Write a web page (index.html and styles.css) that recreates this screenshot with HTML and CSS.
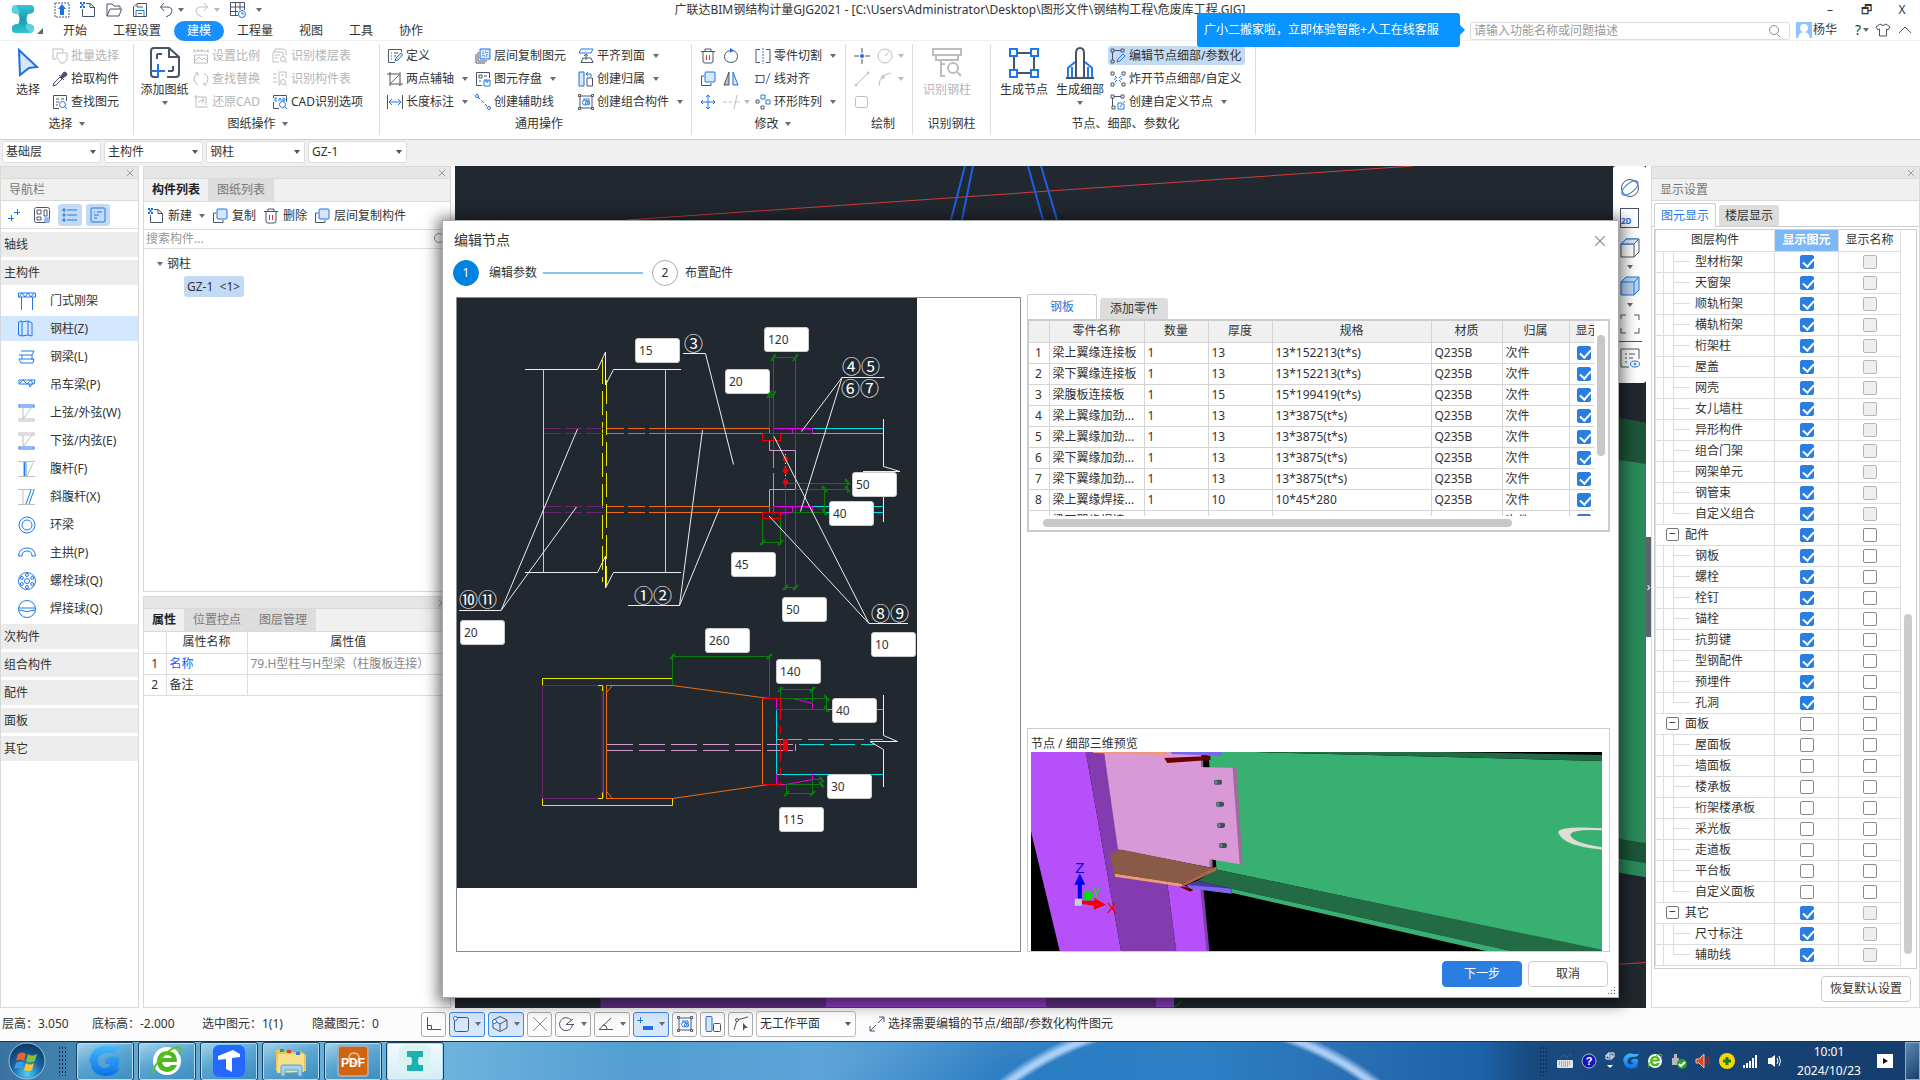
FILE: index.html
```html
<!DOCTYPE html>
<html lang="zh-CN">
<head>
<meta charset="utf-8">
<title>广联达BIM钢结构计量GJG2021</title>
<link rel="stylesheet" href="styles.css">
</head>
<body>
<svg class="defs" aria-hidden="true">
<defs>
<linearGradient id="teal" x1="0" y1="0" x2="0" y2="1"><stop offset="0" stop-color="#35c4d8"/><stop offset=".5" stop-color="#1d9db0"/><stop offset="1" stop-color="#2fc5cf"/></linearGradient>
<linearGradient id="gblue" x1="0" y1="0" x2="0" y2="1"><stop offset="0" stop-color="#45b8ff"/><stop offset="1" stop-color="#0a72e8"/></linearGradient>
<radialGradient id="orb" cx=".5" cy=".85" r=".9"><stop offset="0" stop-color="#4fd0ff"/><stop offset=".45" stop-color="#1a64a0"/><stop offset="1" stop-color="#0c2f55"/></radialGradient>
</defs>
<symbol id="logo" viewBox="0 0 24 30"><path d="M1 4Q1 1 5 1H19Q23 1 23 4V7Q22 10 17 10Q14 15 17 20Q23 20 23 24V26Q22 29 19 29H5Q1 29 1 26V23Q2 20 7 20Q10 15 7 10Q1 10 1 7Z" fill="url(#teal)"/><path d="M1 4Q1 1 5 1L8 6Q10 9 7 10Q1 10 1 7ZM23 26Q22 29 19 29L15 24Q14 20 17 20Q23 20 23 24Z" fill="#7fe3ea" opacity=".6"/></symbol>
<symbol id="up" viewBox="0 0 16 16"><rect x="1" y="1" width="14" height="14" class="k" stroke-dasharray="2 1"/><path d="M8 2L12 7H10V13H6V7H4Z" fill="#1e70e0"/></symbol>
<symbol id="new" viewBox="0 0 16 16"><path d="M6 1.500H10L14.500 5.500V14.500H2.500V7M10 1.500V5.500H14.500" class="k"/><path d="M0 0h2v2H0zM3 0h2v2H3zM1.500 2h2v2h-2zM0 4h2v2H0zM3 4h2v2H3z" fill="#1e70e0"/></symbol>
<symbol id="open" viewBox="0 0 16 16"><path d="M1 14V2H6L8 4H14V7M1 14L4 7H15.500L13 14Z" class="k"/></symbol>
<symbol id="save" viewBox="0 0 16 16"><path d="M1.500 14.500V5L5 1.500H14.500V14.500ZM5 2V5H11" class="k"/><path d="M4 14V8.500H12V14M6 11.500H10" class="b"/></symbol>
<symbol id="undo" viewBox="0 0 16 16"><path d="M6 1L2.500 5L6 9M2.500 5H9Q14 5 14 9Q14 13 8 15" class="k"/></symbol>
<symbol id="redo" viewBox="0 0 16 16"><path d="M10 1L13.500 5L10 9M13.500 5H7Q2 5 2 9Q2 13 8 15" class="g"/></symbol>
<symbol id="gridc" viewBox="0 0 16 16"><path d="M.5 .5H14.500V8M.5 .5V13.500H8M5.500 .5V13M10 .5V8M.5 5H14.500M.5 9.500H8" class="k"/><circle cx="12" cy="12" r="3.500" class="b"/><path d="M12 10V12H14" class="b"/></symbol>
<symbol id="cursor" viewBox="0 0 24 30"><path d="M3 2L21 19L13 20L4 27Z" fill="#d7e6fb" stroke="#1e70e0" stroke-width="2"/></symbol>
<symbol id="batch" viewBox="0 0 16 16"><path d="M4 11H1V1H11V4M5 5H15V12L12 15H9L5 10Z" class="g"/></symbol>
<symbol id="pick" viewBox="0 0 16 16"><path d="M1 15L2 12L8 6L10 8L4 14Z" class="k"/><path d="M7 4L12 9M9 5L12 1Q15 1 15 4L11 7Z" class="k" fill="#4a5468"/></symbol>
<symbol id="find" viewBox="0 0 16 16"><path d="M7 14.500H1.500V1.500H14.500V7M4 5H7M9 5H12M4 8H7M4 11H6" class="k"/><circle cx="10.500" cy="10.500" r="3" class="b"/><path d="M12.500 12.500L15 15" class="b"/></symbol>
<symbol id="addpaper" viewBox="0 0 32 32"><path d="M9 30H5Q2 30 2 27V4Q2 1 5 1H20L30 10V27Q30 30 27 30H18M20 1V10H30" class="k2"/><path d="M8 7H13M8 7V12M24 24H19M24 24V19" class="k2"/><path d="M2 24H16M9 17V31" class="b2"/></symbol>
<symbol id="scale" viewBox="0 0 16 16"><path d="M1 3H15M1 1V5M15 1V5M5 1V4M9 1V4M1.500 7H14.500V15H1.500ZM2 13L6 9L9 12L11 10L14 13" class="g"/></symbol>
<symbol id="repl" viewBox="0 0 16 16"><path d="M5 2Q1 4 1 8Q1 12 5 14M11 2Q15 4 15 8Q15 12 11 14M5 5V2H2M11 11V14H14" class="g"/></symbol>
<symbol id="rest" viewBox="0 0 16 16"><path d="M3 1V13H15M1 3H13V11M5 9Q7 6 11 6M11 6L9 4M11 6L9 9" class="g"/></symbol>
<symbol id="floor" viewBox="0 0 16 16"><path d="M3 4V1H12L14 3V7M1 4H11V8M1 4V14H7M3 7H8M3 10H6" class="g"/><circle cx="11" cy="11" r="2.500" class="g"/><path d="M13 13L15 15" class="g"/></symbol>
<symbol id="comp" viewBox="0 0 16 16"><path d="M7 1H14V7M7 1V14H8M1 3H5M1 7H5M1 11H5M9 4H12" class="g"/><circle cx="11" cy="11" r="2.500" class="g"/><path d="M13 13L15 15" class="g"/></symbol>
<symbol id="cad" viewBox="0 0 16 16"><path d="M7 14.500H1.500V8M14.500 8V5M1.500 4V1.500H14.500V5" class="k"/><path d="M5 4H3V7H5M6.500 7L8 4L9.500 7M11 4V7Q13.500 7 13 5.500Q13 4 11 4M10.500 10.500m-3 0a3 3 0 1 0 6 0a3 3 0 1 0-6 0M12.500 12.500L15 15" class="b"/></symbol>
<symbol id="def" viewBox="0 0 16 16"><path d="M8 14.500H1.500V1.500H14.500V4M4 5H5M7 5H11M4 8H5M7 8H9M4 11H5" class="k"/><path d="M8 13L9 10L14 5L15.500 7L11 12Z" class="b" fill="#d7e6fb"/></symbol>
<symbol id="twop" viewBox="0 0 16 16"><path d="M0 3H12M3 1V15M13 1V15M3 13H16" class="k"/><path d="M3 13L13 3" class="b"/></symbol>
<symbol id="dim" viewBox="0 0 16 16"><path d="M.5 1V15M15.500 1V15" class="k"/><path d="M2 8H14M5 5L2 8L5 11M11 5L14 8L11 11" class="b"/></symbol>
<symbol id="lcopy" viewBox="0 0 16 16"><path d="M1 6V15H10M3 4V13H12" class="k"/><path d="M5 1H15V11H5Z" fill="#d7e6fb" stroke="#1e70e0"/><path d="M8 4h4v4H8z" class="b" stroke-dasharray="1 1"/></symbol>
<symbol id="store" viewBox="0 0 16 16"><path d="M7 14.500H1.500V1.500H14.500V7M4 4H7V7H4ZM9 5H12M4 10H6" class="k"/><path d="M9 9H15V15H9ZM11 9V11H13V9" class="b"/></symbol>
<symbol id="aux" viewBox="0 0 16 16"><path d="M3 3L13 13" class="k" stroke-dasharray="3 2"/><circle cx="2" cy="2" r="1.500" class="b"/><circle cx="14" cy="14" r="1.500" class="b"/></symbol>
<symbol id="flat" viewBox="0 0 16 16"><path d="M3 1H15L13 5H1Z" class="b"/><path d="M3 14.500H15L13 10H5ZM8 12V6M6 8L8 6L10 8" class="k"/></symbol>
<symbol id="belong" viewBox="0 0 16 16"><path d="M1 1H6V15H1Z" fill="#d7e6fb" stroke="#1e70e0"/><path d="M9 7H14.500V15H9Z" class="k"/><path d="M8 3H13V6M10 1L8 3L10 5" class="b"/></symbol>
<symbol id="pair" viewBox="0 0 16 16"><rect x="1" y=".5" width="6" height="15" rx="1" fill="#d7e6fb" stroke="#1e70e0"/><rect x="8.500" y="7.500" width="7" height="8" rx="1" class="k"/></symbol>
<symbol id="group" viewBox="0 0 16 16"><path d="M2 2H14V14H2Z" class="k"/><path d="M.5 .5h2v2h-2zM13.500 .5h2v2h-2zM.5 13.500h2v2h-2zM13.500 13.500h2v2h-2z" class="k" fill="#fff"/><circle cx="7" cy="8.500" r="2.500" class="b"/><path d="M5 5H11V11" class="b"/><circle cx="9.500" cy="9" r="2" class="b"/></symbol>
<symbol id="del" viewBox="0 0 16 16"><path d="M1 3.500H15M5 3V1H11V3M3 4V13Q3 15 5 15H11Q13 15 13 13V4" class="k"/><path d="M6.500 7V12M9.500 7V12" stroke="#e03030"/></symbol>
<symbol id="rot" viewBox="0 0 16 16"><path d="M10 2.500Q14.500 4 14.500 8.500Q14 14.500 8 14.500Q1.500 14 1.500 8.500Q2 3.500 7 2.500" class="k"/><path d="M7 0L11 2.500L7 5Z" fill="#1e70e0"/></symbol>
<symbol id="copy" viewBox="0 0 16 16"><path d="M4 5H1.500V14.500H11V12" class="k"/><rect x="5" y="1" width="10" height="10" rx="1" fill="#d7e6fb" stroke="#1e70e0"/></symbol>
<symbol id="mir" viewBox="0 0 16 16"><path d="M6 1V14H1Z" class="k" fill="#b9bfc9"/><path d="M10 1V14H15Z" fill="#d7e6fb" stroke="#1e70e0"/></symbol>
<symbol id="move" viewBox="0 0 16 16"><path d="M8 1V15M1 8H15M6 3L8 1L10 3M6 13L8 15L10 13M3 6L1 8L3 10M13 6L15 8L13 10" class="b"/></symbol>
<symbol id="trim" viewBox="0 0 16 16"><path d="M0 8H4M6 8H9M11 15L14 1M13 8H16" class="g"/></symbol>
<symbol id="cut" viewBox="0 0 16 16"><path d="M5 1.500H1V14.500H5M11 1.500H15V14.500H11" class="k"/><path d="M8 0V16" class="b" stroke-dasharray="2 1"/></symbol>
<symbol id="align" viewBox="0 0 16 16"><path d="M0 4.500H9M0 11.500H9M2 4V11M9 4V11" class="k"/><path d="M11 13L15 2" class="b"/></symbol>
<symbol id="ring" viewBox="0 0 16 16"><path d="M1 6H4V9H1ZM6 12H9V15H6Z" class="k"/><path d="M6 1H10V5H6ZM11 6H15V10H11Z" class="b"/></symbol>
<symbol id="pt" viewBox="0 0 16 16"><path d="M8 0V5M8 11V16M0 8H5M11 8H16" class="k"/><circle cx="8" cy="8" r="2" fill="#1e70e0"/></symbol>
<symbol id="circ" viewBox="0 0 16 16"><circle cx="8" cy="8" r="7" class="g"/><path d="M8 8L12 4" class="g"/></symbol>
<symbol id="ln" viewBox="0 0 16 16"><path d="M2 14L14 2" class="g"/><circle cx="2" cy="14" r="1" class="g"/><circle cx="14" cy="2" r="1" class="g"/></symbol>
<symbol id="arc" viewBox="0 0 16 16"><path d="M2 15Q2 4 14 2" class="g"/><circle cx="6" cy="6" r="1.500" class="g"/></symbol>
<symbol id="rc" viewBox="0 0 16 16"><rect x="1.500" y="2.500" width="12" height="11" rx="2" class="g"/></symbol>
<symbol id="idcol" viewBox="0 0 32 32"><path d="M2 2H30V8H2ZM5 8V13H27V8M10 13V29H14M10 17H14" class="g2"/><circle cx="22" cy="21" r="5" class="g2"/><path d="M26 25L30 29" class="g2"/></symbol>
<symbol id="gnode" viewBox="0 0 32 32"><path d="M6 8V24M26 8V24M8 6H24M8 26H24" class="k2"/><path d="M2 2H9V9H2ZM23 2H30V9H23ZM2 23H9V30H2ZM23 23H30V30H23Z" fill="#fff" class="b2"/></symbol>
<symbol id="gdet" viewBox="0 0 32 32"><path d="M12 30V6Q12 1 16 1Q20 1 20 6V30M2 31H30" class="k2"/><path d="M4 30V21L11 15M28 30V21L21 15M8 20V30M24 20V30" class="b2"/></symbol>
<symbol id="enode" viewBox="0 0 16 16"><path d="M1 1H4V4H1ZM11 1H14V4H11ZM1 12H4V15H1ZM2.500 4V12M4 2.500H11" class="k"/><path d="M7 14L8 11L13 6L15 8L10 13Z" class="b"/></symbol>
<symbol id="xnode" viewBox="0 0 16 16"><path d="M1 1H4V4H1ZM12 1H15V4H12ZM1 12H4V15H1ZM12 12H15V15H12Z" class="k"/><path d="M5 5L7 7M11 5L9 7M5 11L7 9M11 11L9 9M6 8H4M12 8H10" class="b"/></symbol>
<symbol id="cnode" viewBox="0 0 16 16"><path d="M1 1H4V4H1ZM11 1H14V4H11ZM2 12H5V15H2ZM2.500 4V12M4 2.500H11" class="k"/><path d="M14 10V15H8V9H12M10 13L15 7" class="b"/></symbol>
<symbol id="mag" viewBox="0 0 16 16"><circle cx="7" cy="7" r="4.500" class="gd"/><path d="M10 11L13 14" class="gd"/></symbol>
<symbol id="x" viewBox="0 0 10 10"><path d="M1 1L9 9M9 1L1 9" class="gd"/></symbol>
<symbol id="shirt" viewBox="0 0 16 16"><path d="M5 2L1 5L3 8L4.500 7V14H11.500V7L13 8L15 5L11 2Q8 5 5 2Z" class="k"/></symbol>
<symbol id="caret" viewBox="0 0 16 16"><path d="M2 11L8 5L14 11" class="k"/></symbol>
<symbol id="plus2" viewBox="0 0 16 16"><path d="M11.500 2V8M8 5.500H14M5.500 8V14M2 11.500H8" class="b"/></symbol>
<symbol id="blocks" viewBox="0 0 16 16"><rect x=".5" y=".5" width="15" height="15" rx="2" class="k"/><path d="M3 3H7V7H3ZM10 3H13V9H10ZM3 10H7V13H3Z" class="k"/><circle cx="13" cy="13" r="3" fill="#8db8f4"/></symbol>
<symbol id="list" viewBox="0 0 16 16"><path d="M1 2H3V4H1ZM1 7H3V9H1ZM1 12H3V14H1ZM5 3H15M5 8H15M5 13H15" class="b"/></symbol>
<symbol id="card" viewBox="0 0 16 16"><rect x="1" y="1" width="14" height="14" rx="1" class="b"/><path d="M4 5H5M7 5H12M4 8H9M4 11H7" class="b"/></symbol>
<symbol id="n1" viewBox="0 0 18 18"><path d="M.5 1H17.500V5H.5ZM1 5L4 1L7 5L10 1L13 5L16 1" class="b"/><path d="M3.500 5V18M14.500 5V18" class="b"/></symbol>
<symbol id="n2" viewBox="0 0 18 18"><path d="M.5 2L4 1V16L.5 15ZM4 2L10 1V15L4 16M10 1L14 3V16L10 15" class="b"/></symbol>
<symbol id="n3" viewBox="0 0 18 18"><path d="M3 3H16L14 7H1M4 7V11H1L3 15H15L16 11H4M14 7V12" class="b"/></symbol>
<symbol id="n4" viewBox="0 0 18 18"><path d="M1 4H17L16 8H1ZM1 8L5 4L9 8L13 4L15 8M11 8L12 11L14 8" class="b"/></symbol>
<symbol id="n5" viewBox="0 0 18 18"><rect x="1" y="1" width="15" height="2" class="b"/><rect x="1" y="15" width="15" height="2" class="g"/><path d="M5 3V15L14 3" class="g"/></symbol>
<symbol id="n6" viewBox="0 0 18 18"><rect x="1" y="1" width="15" height="2" class="g"/><rect x="1" y="15" width="15" height="2" class="b"/><path d="M5 3V15L14 3" class="g"/></symbol>
<symbol id="n7" viewBox="0 0 18 18"><path d="M0 1.500H17M0 16.500H17M9 16L15 3" class="g"/><rect x="5" y="2" width="4" height="14" fill="#9cc6f8"/><path d="M6.500 2V16" class="b"/></symbol>
<symbol id="n8" viewBox="0 0 18 18"><path d="M0 1.500H17M0 16.500H17M5 2V16" class="g"/><path d="M8 16L13 2M11 16L16 2" class="b"/></symbol>
<symbol id="n9" viewBox="0 0 18 18"><circle cx="9" cy="9" r="8" class="b"/><circle cx="9" cy="9" r="5" class="b"/></symbol>
<symbol id="n10" viewBox="0 0 18 18"><path d="M.5 12Q1 4 9 4Q17 4 17.500 12H14Q14 7 9 7Q4 7 4 12Z" class="b"/></symbol>
<symbol id="n11" viewBox="0 0 18 18"><circle cx="9" cy="9" r="8.500" class="b"/><circle cx="9" cy="9" r="2.500" class="b"/><g class="b"><circle cx="9" cy="3" r="1.500"/><circle cx="9" cy="15" r="1.500"/><circle cx="3.800" cy="6" r="1.500"/><circle cx="14.200" cy="6" r="1.500"/><circle cx="3.800" cy="12" r="1.500"/><circle cx="14.200" cy="12" r="1.500"/></g></symbol>
<symbol id="n12" viewBox="0 0 18 18"><circle cx="9" cy="9" r="8.500" class="b"/><path d="M1 8H17M1 10Q9 13 17 10" class="b"/></symbol>
<symbol id="orbit" viewBox="0 0 20 20"><circle cx="10" cy="10" r="8.500" class="k"/><ellipse cx="10" cy="10" rx="10" ry="4.500" transform="rotate(-40 10 10)" class="b"/></symbol>
<symbol id="cube" viewBox="0 0 20 20"><path d="M1 6H14V19H1ZM1 6L6 1H19V14L14 19" class="k"/><path d="M1 6L6 1H19L14 6Z" fill="#d7e6fb" stroke="#1e70e0"/></symbol>
<symbol id="cubef" viewBox="0 0 20 20"><path d="M1 6L6 1H19V14L14 19H1Z" fill="#bcd6f5" stroke="#1e70e0"/><path d="M1 6H14V19M14 6L19 1" class="b"/></symbol>
<symbol id="exp" viewBox="0 0 20 20"><path d="M1 5V1H6M14 1H19V6M1 14V19H6M14 19H19V14" class="k"/></symbol>
<symbol id="doceye" viewBox="0 0 20 20"><path d="M9 19H1V1H19V11M5 6H7M9 6H15M5 10H7M9 10H13M5 14H7" class="k"/><ellipse cx="15" cy="16" rx="4.500" ry="3" class="b"/><circle cx="15" cy="16" r="1" class="b"/></symbol>
<symbol id="s1" viewBox="0 0 16 16"><path d="M1.500 1V13.500H15M1.500 9.500H5.500V13.500" class="k"/></symbol>
<symbol id="s2" viewBox="0 0 16 16"><rect x="1.500" y="1.500" width="14" height="14" rx="2" class="k"/><circle cx="2.500" cy="2.500" r="2" fill="#fff" stroke="#1e70e0"/></symbol>
<symbol id="s3" viewBox="0 0 16 16"><path d="M8 .5L15 4V12L8 15.500L1 12V4ZM1 4L8 8L15 4M8 8V15" class="k"/><circle cx="2.500" cy="5.500" r="2" fill="#fff" stroke="#1e70e0"/></symbol>
<symbol id="s4" viewBox="0 0 16 16"><path d="M1 1L15 15M15 1L1 15" class="gd"/></symbol>
<symbol id="s5" viewBox="0 0 16 16"><path d="M12 4A6.500 6.500 0 1 0 13.500 8.500M7 8.500H15M7 8.500L14 3" class="k"/></symbol>
<symbol id="s6" viewBox="0 0 16 16"><path d="M1 13.500H15M1 13.500L13 2M5 9Q9 9 9 13" class="k"/></symbol>
<symbol id="s7" viewBox="0 0 16 16"><path d="M3.500 1V7M0 4.500H6" class="b"/><rect x="6" y="10" width="10" height="4" fill="#1e70e0"/></symbol>
<symbol id="s8" viewBox="0 0 16 16"><path d="M1 14L4 4L15 1" class="k"/><circle cx="4" cy="4" r="1.500" class="k" fill="#fff"/><path d="M10 7L15 12L12 12L10 15Z" fill="#4a5468"/></symbol>
<symbol id="arr" viewBox="0 0 16 16"><path d="M1 15L7 9M9 7L15 1M10 1H15V6M1 10V15H6" class="k"/></symbol>
<symbol id="gl" viewBox="0 0 32 32"><path d="M32 1Q29 9 20 8Q9 8 9 16Q9 23 16 23Q20 23 21 19H17Q15 16 18 13Q24 10 30 13Q31 20 27 24Q30 24 31 22Q28 32 15 31Q2 29 2 18Q-1 17 1 12Q5 0 17 1Q25 3 32 1Z" fill="url(#gblue)"/></symbol>
<symbol id="ie" viewBox="0 0 32 32"><circle cx="16" cy="16" r="14" fill="#fff"/><path d="M26 20Q23 27 16 27Q6 26 6 16Q7 6 16 6Q26 6 26 17H11Q12 22 16 22Q19 22 20 20ZM11 13H21Q20 10 16 10Q12 10 11 13Z" fill="#4fb81c" fill-rule="evenodd"/><path d="M3 29Q0 24 12 11Q24 0 29 3Q31 5 28 9" fill="none" stroke="#5cc41f" stroke-width="2"/></symbol>
<symbol id="bolt" viewBox="-4 -3 8 6"><rect x="-4" y="-2.500" width="8" height="5" rx="2" fill="#3c5058"/><ellipse cx="-2" cy="0" rx="1.500" ry="2" fill="#6a8088"/></symbol>
</svg>

<div class="app">
<header class="head">
  <div class="logo"><svg width="24" height="30"><use href="#logo"/></svg><i class="corner"></i></div>
  <div class="quick">
    <button aria-label="升级"><svg class="ic"><use href="#up"/></svg></button><button aria-label="新建工程"><svg class="ic"><use href="#new"/></svg></button><button aria-label="打开"><svg class="ic"><use href="#open"/></svg></button><button aria-label="保存"><svg class="ic"><use href="#save"/></svg></button><button class="wide" aria-label="撤销"><svg class="ic"><use href="#undo"/></svg><i class="dd"></i></button><button class="wide" aria-label="恢复"><svg class="ic"><use href="#redo"/></svg><i class="dd off"></i></button><button aria-label="表格"><svg class="ic"><use href="#gridc"/></svg></button><button class="thin" aria-label="更多"><i class="dd"></i></button>
  </div>
  <h1 class="title">广联达BIM钢结构计量GJG2021 - [C:\Users\Administrator\Desktop\图形文件\钢结构工程\危废库工程.GJG]</h1>
  <div class="win"><button aria-label="最小化">–</button><button aria-label="还原">🗗</button><button aria-label="关闭">X</button></div>
  <div class="second">
    <nav class="tabs"><a href="#">开始</a><a href="#">工程设置</a><a href="#" class="on">建模</a><a href="#">工程量</a><a href="#">视图</a><a href="#">工具</a><a href="#">协作</a></nav>
    <div class="help">
      <div class="search"><input aria-label="搜索功能" placeholder="请输入功能名称或问题描述"><svg class="ic"><use href="#mag"/></svg></div>
      <span class="avatar"><svg width="16" height="16"><circle cx="8" cy="6" r="4" fill="#fff"/><path d="M2 16Q3 10 8 10Q13 10 14 16Z" fill="#fff"/></svg></span><span class="user">杨华</span>
      <button class="q" aria-label="帮助">?<i class="dd"></i></button><button aria-label="皮肤"><svg class="ic"><use href="#shirt"/></svg></button><button aria-label="收起"><svg class="ic"><use href="#caret"/></svg></button>
    </div>
  </div>
  <div class="bubble">广小二搬家啦，立即体验智能+人工在线客服</div>
</header>

<section class="ribbon">
  <div class="grp g-sel"><div class="body">
    <button class="big"><svg width="24" height="32"><use href="#cursor"/></svg>选择</button>
    <div class="col"><button class="tool off"><svg class="ic"><use href="#batch"/></svg>批量选择</button><button class="tool"><svg class="ic"><use href="#pick"/></svg>拾取构件</button><button class="tool"><svg class="ic"><use href="#find"/></svg>查找图元</button></div>
  </div><div class="cap">选择<i class="dd"></i></div></div>
  <div class="grp g-draw"><div class="body">
    <button class="big"><svg width="32" height="32"><use href="#addpaper"/></svg>添加图纸<i class="dd"></i></button>
    <div class="col"><button class="tool off"><svg class="ic"><use href="#scale"/></svg>设置比例</button><button class="tool off"><svg class="ic"><use href="#repl"/></svg>查找替换</button><button class="tool off"><svg class="ic"><use href="#rest"/></svg>还原CAD</button></div>
    <div class="col"><button class="tool off"><svg class="ic"><use href="#floor"/></svg>识别楼层表</button><button class="tool off"><svg class="ic"><use href="#comp"/></svg>识别构件表</button><button class="tool"><svg class="ic"><use href="#cad"/></svg>CAD识别选项</button></div>
  </div><div class="cap">图纸操作<i class="dd"></i></div></div>
  <div class="grp g-gen"><div class="body">
    <div class="col"><button class="tool"><svg class="ic"><use href="#def"/></svg>定义</button><button class="tool"><svg class="ic"><use href="#twop"/></svg>两点辅轴<i class="dd"></i></button><button class="tool"><svg class="ic"><use href="#dim"/></svg>长度标注<i class="dd"></i></button></div>
    <div class="col"><button class="tool"><svg class="ic"><use href="#lcopy"/></svg>层间复制图元</button><button class="tool"><svg class="ic"><use href="#store"/></svg>图元存盘<i class="dd"></i></button><button class="tool"><svg class="ic"><use href="#aux"/></svg>创建辅助线</button></div>
    <div class="col"><button class="tool"><svg class="ic"><use href="#flat"/></svg>平齐到面<i class="dd"></i></button><button class="tool"><svg class="ic"><use href="#belong"/></svg>创建归属<i class="dd"></i></button><button class="tool"><svg class="ic"><use href="#group"/></svg>创建组合构件<i class="dd"></i></button></div>
  </div><div class="cap">通用操作</div></div>
  <div class="grp g-mod"><div class="body">
    <div class="col"><button class="tool" aria-label="删除"><svg class="ic"><use href="#del"/></svg></button><button class="tool" aria-label="复制"><svg class="ic"><use href="#copy"/></svg></button><button class="tool" aria-label="移动"><svg class="ic"><use href="#move"/></svg></button></div>
    <div class="col"><button class="tool" aria-label="旋转"><svg class="ic"><use href="#rot"/></svg></button><button class="tool" aria-label="镜像"><svg class="ic"><use href="#mir"/></svg></button><button class="tool off tight" aria-label="修剪"><svg class="ic"><use href="#trim"/></svg><i class="dd off"></i></button></div>
    <div class="col"><button class="tool"><svg class="ic"><use href="#cut"/></svg>零件切割<i class="dd"></i></button><button class="tool"><svg class="ic"><use href="#align"/></svg>线对齐</button><button class="tool"><svg class="ic"><use href="#ring"/></svg>环形阵列<i class="dd"></i></button></div>
  </div><div class="cap">修改<i class="dd"></i></div></div>
  <div class="grp g-pen"><div class="body">
    <div class="col"><button class="tool" aria-label="点"><svg class="ic"><use href="#pt"/></svg></button><button class="tool" aria-label="直线"><svg class="ic"><use href="#ln"/></svg></button><button class="tool" aria-label="矩形"><svg class="ic"><use href="#rc"/></svg></button></div>
    <div class="col"><button class="tool tight" aria-label="圆"><svg class="ic"><use href="#circ"/></svg><i class="dd off"></i></button><button class="tool tight" aria-label="弧"><svg class="ic"><use href="#arc"/></svg><i class="dd off"></i></button></div>
  </div><div class="cap">绘制</div></div>
  <div class="grp g-id"><div class="body"><button class="big off"><svg width="32" height="32"><use href="#idcol"/></svg>识别钢柱</button></div><div class="cap">识别钢柱</div></div>
  <div class="grp g-node"><div class="body">
    <button class="big"><svg width="32" height="32"><use href="#gnode"/></svg>生成节点</button>
    <button class="big"><svg width="32" height="32"><use href="#gdet"/></svg>生成细部<i class="dd"></i></button>
    <div class="col"><button class="tool active"><svg class="ic"><use href="#enode"/></svg>编辑节点细部/参数化</button><button class="tool"><svg class="ic"><use href="#xnode"/></svg>炸开节点细部/自定义</button><button class="tool"><svg class="ic"><use href="#cnode"/></svg>创建自定义节点<i class="dd"></i></button></div>
  </div><div class="cap">节点、细部、参数化</div></div>
</section>

<div class="context">
  <select aria-label="楼层"><option>基础层</option></select><select aria-label="构件分类"><option>主构件</option></select><select aria-label="构件类型"><option>钢柱</option></select><select aria-label="构件"><option>GZ-1</option></select>
</div>

<main class="work">
  <aside class="panel nav">
    <div class="grip"><svg width="8" height="8"><use href="#x"/></svg></div>
    <h2 class="ptitle">导航栏</h2>
    <div class="navtools"><button aria-label="添加"><svg class="ic"><use href="#plus2"/></svg></button><button aria-label="分块"><svg class="ic"><use href="#blocks"/></svg></button><button class="on" aria-label="列表"><svg class="ic"><use href="#list"/></svg></button><button class="on" aria-label="详情"><svg class="ic"><use href="#card"/></svg></button></div>
    <ul class="navlist">
      <li class="sec">轴线</li><li class="sec">主构件</li>
      <li><svg class="ni"><use href="#n1"/></svg>门式刚架</li>
      <li class="cur"><svg class="ni"><use href="#n2"/></svg>钢柱(Z)</li>
      <li><svg class="ni"><use href="#n3"/></svg>钢梁(L)</li>
      <li><svg class="ni"><use href="#n4"/></svg>吊车梁(P)</li>
      <li><svg class="ni"><use href="#n5"/></svg>上弦/外弦(W)</li>
      <li><svg class="ni"><use href="#n6"/></svg>下弦/内弦(E)</li>
      <li><svg class="ni"><use href="#n7"/></svg>腹杆(F)</li>
      <li><svg class="ni"><use href="#n8"/></svg>斜腹杆(X)</li>
      <li><svg class="ni"><use href="#n9"/></svg>环梁</li>
      <li><svg class="ni"><use href="#n10"/></svg>主拱(P)</li>
      <li><svg class="ni"><use href="#n11"/></svg>螺栓球(Q)</li>
      <li><svg class="ni"><use href="#n12"/></svg>焊接球(Q)</li>
      <li class="sec">次构件</li><li class="sec">组合构件</li><li class="sec">配件</li><li class="sec">面板</li><li class="sec">其它</li>
    </ul>
  </aside>

  <div class="mid">
    <section class="panel comps">
      <div class="grip"><svg width="8" height="8"><use href="#x"/></svg></div>
      <div class="ptabs"><button class="on">构件列表</button><button>图纸列表</button></div>
      <div class="ctools"><button><svg class="ic"><use href="#new"/></svg>新建<i class="dd"></i></button><button><svg class="ic"><use href="#copy"/></svg>复制</button><button><svg class="ic"><use href="#del"/></svg>删除</button><button><svg class="ic"><use href="#copy"/></svg>层间复制构件</button></div>
      <div class="csearch"><input aria-label="搜索构件" placeholder="搜索构件..."><svg class="ic"><use href="#mag"/></svg></div>
      <div class="tree"><div class="t0"><i class="dd"></i>钢柱</div><div class="t1"><span>GZ-1&nbsp; &lt;1&gt;</span></div></div>
    </section>
    <section class="panel props">
      <div class="grip"><svg width="8" height="8"><use href="#x"/></svg></div>
      <div class="ptabs"><button class="on">属性</button><button>位置控点</button><button>图层管理</button></div>
      <table class="ptable"><colgroup><col class="p0"><col class="p1"><col></colgroup>
        <tr><th></th><th>属性名称</th><th>属性值</th></tr>
        <tr><td class="n">1</td><td class="link">名称</td><td class="dim">79.H型柱与H型梁（柱腹板连接）</td></tr>
        <tr><td class="n">2</td><td>备注</td><td></td></tr>
      </table>
    </section>
  </div>

  <div class="canvas">
    <svg class="scene" viewBox="455 166 1191 841" preserveAspectRatio="xMidYMid slice">
      <path d="M627 220L1413 166M1600 965L1646 962" stroke="#d23c3c" fill="none"/>
      <path d="M965 166L951 220M973 166L962 220M1028 166L1043 220M1041 166L1057 220" stroke="#1f5fe0" stroke-width="2" fill="none"/>
      <path d="M1600 415L1646 423V877L1600 869Z" fill="#2a8a5a"/>
      <path d="M1600 415L1646 423V464L1600 457ZM1600 835L1646 843V863L1600 855Z" fill="#1c5537"/>
      <path d="M601 990H1174V1007H601Z" fill="#9040c8"/><path d="M601 990H826V1007H601ZM1046 990H1156V1007H1046Z" fill="#64308a"/>
      <path d="M1174 1006Q1180 1005 1182 995" stroke="#0a7a0a" fill="none"/>
    </svg>
    <div class="viewbar"><svg class="v"><use href="#orbit"/></svg><span class="two">2D</span><svg class="v"><use href="#cube"/></svg><i class="dd"></i><svg class="v"><use href="#cubef"/></svg><i class="dd"></i><svg class="v"><use href="#exp"/></svg><hr><svg class="v"><use href="#doceye"/></svg></div>
  </div>
  <div class="splitter"><button aria-label="收起面板">›</button></div>

  <aside class="panel disp">
    <div class="grip"><svg width="8" height="8"><use href="#x"/></svg></div>
    <h2 class="ptitle">显示设置</h2>
    <div class="dtabs"><button class="on">图元显示</button><button>楼层显示</button></div>
    <div class="dbox">
    <table class="dtable"><colgroup><col><col class="c1"><col class="c2"></colgroup>
      <tr><th>图层构件</th><th class="hl">显示图元</th><th>显示名称</th></tr>
      <tr><td class="leaf">型材桁架</td><td><input type="checkbox" aria-label="型材桁架图元" checked></td><td><input type="checkbox" aria-label="型材桁架名称" disabled></td></tr>
      <tr><td class="leaf">天窗架</td><td><input type="checkbox" aria-label="天窗架图元" checked></td><td><input type="checkbox" aria-label="天窗架名称" disabled></td></tr>
      <tr><td class="leaf">顺轨桁架</td><td><input type="checkbox" aria-label="顺轨桁架图元" checked></td><td><input type="checkbox" aria-label="顺轨桁架名称" disabled></td></tr>
      <tr><td class="leaf">横轨桁架</td><td><input type="checkbox" aria-label="横轨桁架图元" checked></td><td><input type="checkbox" aria-label="横轨桁架名称" disabled></td></tr>
      <tr><td class="leaf">桁架柱</td><td><input type="checkbox" aria-label="桁架柱图元" checked></td><td><input type="checkbox" aria-label="桁架柱名称" disabled></td></tr>
      <tr><td class="leaf">屋盖</td><td><input type="checkbox" aria-label="屋盖图元" checked></td><td><input type="checkbox" aria-label="屋盖名称" disabled></td></tr>
      <tr><td class="leaf">网壳</td><td><input type="checkbox" aria-label="网壳图元" checked></td><td><input type="checkbox" aria-label="网壳名称" disabled></td></tr>
      <tr><td class="leaf">女儿墙柱</td><td><input type="checkbox" aria-label="女儿墙柱图元" checked></td><td><input type="checkbox" aria-label="女儿墙柱名称" disabled></td></tr>
      <tr><td class="leaf">异形构件</td><td><input type="checkbox" aria-label="异形构件图元" checked></td><td><input type="checkbox" aria-label="异形构件名称" disabled></td></tr>
      <tr><td class="leaf">组合门架</td><td><input type="checkbox" aria-label="组合门架图元" checked></td><td><input type="checkbox" aria-label="组合门架名称" disabled></td></tr>
      <tr><td class="leaf">网架单元</td><td><input type="checkbox" aria-label="网架单元图元" checked></td><td><input type="checkbox" aria-label="网架单元名称" disabled></td></tr>
      <tr><td class="leaf">钢管束</td><td><input type="checkbox" aria-label="钢管束图元" checked></td><td><input type="checkbox" aria-label="钢管束名称" disabled></td></tr>
      <tr><td class="leaf last">自定义组合</td><td><input type="checkbox" aria-label="自定义组合图元" checked></td><td><input type="checkbox" aria-label="自定义组合名称" disabled></td></tr>
      <tr><td class="root"><i>−</i>配件</td><td><input type="checkbox" aria-label="配件图元" checked></td><td><input type="checkbox" aria-label="配件名称"></td></tr>
      <tr><td class="leaf">钢板</td><td><input type="checkbox" aria-label="钢板图元" checked></td><td><input type="checkbox" aria-label="钢板名称"></td></tr>
      <tr><td class="leaf">螺栓</td><td><input type="checkbox" aria-label="螺栓图元" checked></td><td><input type="checkbox" aria-label="螺栓名称"></td></tr>
      <tr><td class="leaf">栓钉</td><td><input type="checkbox" aria-label="栓钉图元" checked></td><td><input type="checkbox" aria-label="栓钉名称"></td></tr>
      <tr><td class="leaf">锚栓</td><td><input type="checkbox" aria-label="锚栓图元" checked></td><td><input type="checkbox" aria-label="锚栓名称"></td></tr>
      <tr><td class="leaf">抗剪键</td><td><input type="checkbox" aria-label="抗剪键图元" checked></td><td><input type="checkbox" aria-label="抗剪键名称"></td></tr>
      <tr><td class="leaf">型钢配件</td><td><input type="checkbox" aria-label="型钢配件图元" checked></td><td><input type="checkbox" aria-label="型钢配件名称"></td></tr>
      <tr><td class="leaf">预埋件</td><td><input type="checkbox" aria-label="预埋件图元" checked></td><td><input type="checkbox" aria-label="预埋件名称"></td></tr>
      <tr><td class="leaf last">孔洞</td><td><input type="checkbox" aria-label="孔洞图元" checked></td><td><input type="checkbox" aria-label="孔洞名称"></td></tr>
      <tr><td class="root"><i>−</i>面板</td><td><input type="checkbox" aria-label="面板图元"></td><td><input type="checkbox" aria-label="面板名称"></td></tr>
      <tr><td class="leaf">屋面板</td><td><input type="checkbox" aria-label="屋面板图元"></td><td><input type="checkbox" aria-label="屋面板名称"></td></tr>
      <tr><td class="leaf">墙面板</td><td><input type="checkbox" aria-label="墙面板图元"></td><td><input type="checkbox" aria-label="墙面板名称"></td></tr>
      <tr><td class="leaf">楼承板</td><td><input type="checkbox" aria-label="楼承板图元"></td><td><input type="checkbox" aria-label="楼承板名称"></td></tr>
      <tr><td class="leaf">桁架楼承板</td><td><input type="checkbox" aria-label="桁架楼承板图元"></td><td><input type="checkbox" aria-label="桁架楼承板名称"></td></tr>
      <tr><td class="leaf">采光板</td><td><input type="checkbox" aria-label="采光板图元"></td><td><input type="checkbox" aria-label="采光板名称"></td></tr>
      <tr><td class="leaf">走道板</td><td><input type="checkbox" aria-label="走道板图元"></td><td><input type="checkbox" aria-label="走道板名称"></td></tr>
      <tr><td class="leaf">平台板</td><td><input type="checkbox" aria-label="平台板图元"></td><td><input type="checkbox" aria-label="平台板名称"></td></tr>
      <tr><td class="leaf last">自定义面板</td><td><input type="checkbox" aria-label="自定义面板图元"></td><td><input type="checkbox" aria-label="自定义面板名称"></td></tr>
      <tr><td class="root"><i>−</i>其它</td><td><input type="checkbox" aria-label="其它图元" checked></td><td><input type="checkbox" aria-label="其它名称" disabled></td></tr>
      <tr><td class="leaf">尺寸标注</td><td><input type="checkbox" aria-label="尺寸标注图元" checked></td><td><input type="checkbox" aria-label="尺寸标注名称" disabled></td></tr>
      <tr><td class="leaf last">辅助线</td><td><input type="checkbox" aria-label="辅助线图元" checked></td><td><input type="checkbox" aria-label="辅助线名称" disabled></td></tr>
    </table>
    <div class="dscroll"><i></i></div>
    </div>
    <div class="dfoot"><button>恢复默认设置</button></div>
  </aside>
</main>

<footer class="status">
  <span class="f1">层高：3.050</span><span class="f2">底标高：-2.000</span><span class="f2">选中图元：1(1)</span><span class="f3">隐藏图元：0</span>
  <button aria-label="正交"><svg class="ic"><use href="#s1"/></svg></button><button class="on" aria-label="捕捉"><svg class="ic"><use href="#s2"/></svg><i class="dd"></i></button><button class="on" aria-label="三维"><svg class="ic"><use href="#s3"/></svg><i class="dd"></i></button><button aria-label="交叉"><svg class="ic"><use href="#s4"/></svg></button><button aria-label="极轴"><svg class="ic"><use href="#s5"/></svg><i class="dd"></i></button><button aria-label="角度"><svg class="ic"><use href="#s6"/></svg><i class="dd"></i></button><button class="on" aria-label="动态输入"><svg class="ic"><use href="#s7"/></svg><i class="dd"></i></button><button aria-label="组合"><svg class="ic"><use href="#group"/></svg></button><button aria-label="归属"><svg class="ic"><use href="#pair"/></svg></button><button aria-label="选取"><svg class="ic"><use href="#s8"/></svg></button>
  <select aria-label="工作平面"><option>无工作平面</option></select>
  <svg class="ic hint"><use href="#arr"/></svg><span>选择需要编辑的节点/细部/参数化构件图元</span>
</footer>

<div class="taskbar">
  <button class="start" aria-label="开始"><svg width="38" height="38" viewBox="0 0 38 38"><circle cx="19" cy="19" r="18" fill="url(#orb)" stroke="#8fc4e4"/><path d="M10 12Q14 9 18 12L16 19Q12 16 8 19Z" fill="#f0602a"/><path d="M20 12Q24 15 29 12L27 19Q22 22 18 19Z" fill="#7fc33a"/><path d="M8 21Q12 18 16 21L14 27Q10 25 6 27Z" fill="#3f9ae8"/><path d="M18 21Q22 24 26 21L24 28Q20 30 16 28Z" fill="#fbc62f"/></svg></button>
  <i class="dots"></i>
  <button class="task" aria-label="GTJ"><svg width="32" height="32"><use href="#gl"/></svg></button>
  <button class="task" aria-label="浏览器"><svg width="32" height="32"><use href="#ie"/></svg></button>
  <button class="task" aria-label="T"><svg width="32" height="32"><rect width="32" height="32" rx="6" fill="#2468ff"/><path d="M5 11L20 5L27 9V12L19 13V27L13 24V14L5 15Z" fill="#fff"/></svg></button>
  <button class="task" aria-label="资源管理器"><svg width="34" height="32"><path d="M2 5H10L12 7H28L32 10V26H2Z" fill="#e8c65a"/><path d="M4 9H30V27L3 28Z" fill="#f7e08a"/><path d="M6 4H10V7H6Z" fill="#38a038"/><path d="M13 5H17V8H13Z" fill="#d84030"/><path d="M22 7H26V10H22Z" fill="#3080e0"/><path d="M7 31V22Q7 20 9 20H26Q28 20 28 22V31H24V25H11V31Z" fill="#9fd4f4" stroke="#5f9fd0"/></svg></button>
  <button class="task" aria-label="PDF"><svg width="32" height="32"><rect x="1" y="1" width="30" height="30" rx="3" fill="#d06410" stroke="#a8a8a8" stroke-width="2"/><circle cx="17" cy="13" r="5" fill="none" stroke="#e8b080" stroke-width="2"/><text x="16" y="22" text-anchor="middle" font-size="12" font-weight="700" fill="#fff" font-family="Liberation Sans, sans-serif">PDF</text></svg></button>
  <button class="task cur" aria-label="GJG"><svg width="32" height="32"><rect width="32" height="32" rx="6" fill="#d9f3f1"/><path d="M8 6H24V12H20Q18 16 20 20H24V26H8V20H12Q14 16 12 12H8Z" fill="#1fb0b4"/></svg></button>
  <div class="tray">
    <i class="dots"></i>
    <svg width="16" height="16"><rect y="7" width="16" height="8" rx="1" fill="#e4e4e4"/><path d="M2 9H14M2 11H14M4 13H12M3 5Q6 1 9 4Q12 5 14 1" stroke="#777" stroke-dasharray="1 1" fill="none"/></svg>
    <svg width="16" height="16"><circle cx="8" cy="8" r="7" fill="#1414b8" stroke="#bbb"/><text x="8" y="12" text-anchor="middle" font-size="11" font-weight="700" fill="#fff" font-family="Liberation Sans, sans-serif">?</text></svg>
    <svg width="10" height="18"><path d="M3 1H9V5H3ZM1 3H7V7H1Z" stroke="#fff" fill="none"/><path d="M2 13H8L5 16Z" fill="#fff"/></svg>
    <svg width="16" height="16"><use href="#gl"/></svg>
    <svg width="16" height="16"><use href="#ie"/></svg>
    <svg width="16" height="16"><path d="M1 5H8V12H1ZM3 1H6V5H3Z" fill="#b8b8b8"/><circle cx="11" cy="11" r="5" fill="#28a028"/><path d="M8 11L10 13L14 9" stroke="#fff" stroke-width="2" fill="none"/></svg>
    <svg width="16" height="16"><path d="M1 6H4L9 1V15L4 10H1Z" fill="#d84a28" stroke="#f8b898"/><path d="M11 5Q13 8 11 11M13 3Q16 8 13 13" stroke="#a83020" fill="none"/></svg>
    <svg width="16" height="16"><circle cx="8" cy="8" r="8" fill="#f4d800"/><path d="M8 4V12M4 8H12" stroke="#207a20" stroke-width="3"/></svg>
    <svg width="16" height="16"><path d="M1 12V15M4 10V15M7 8V15M10 5V15M13 2V15" stroke="#fff" stroke-width="2"/></svg>
    <svg width="16" height="16"><path d="M1 5H4L8 2V14L4 11H1Z" fill="#fff"/><path d="M10 5Q12 8 10 11M12 3Q15 8 12 13" stroke="#fff" fill="none"/></svg>
    <time>10:01<br>2024/10/23</time>
    <svg class="ime" width="16" height="14"><rect width="16" height="14" fill="#fff"/><path d="M6 4L11 7L6 10Z" fill="#111"/></svg>
    <i class="peek"></i>
  </div>
</div>

<div class="dialog" role="dialog" aria-label="编辑节点">
  <div class="dhead"><h2>编辑节点</h2><button aria-label="关闭"><svg width="12" height="12"><use href="#x"/></svg></button></div>
  <div class="steps"><b class="on">1</b><span>编辑参数</span><hr><b>2</b><span class="next">布置配件</span></div>
  <div class="dbody">
    <div class="frame"><div class="sheet">
      <svg viewBox="457 298 460 590" width="460" height="590" fill="none">
        <g class="yl"><path d="M543.500 369V572M665.500 369V572"/><path d="M602.500 360V582" stroke-dasharray="24 7"/><path d="M606.500 380V586" stroke-dasharray="24 7"/>
          <path d="M542.500 686V678.500H672.500V685M542.500 798V805.500H672.500V798M598 685.500H602.500V691M606.500 691V685.500H612M598 798.500H602.500V792M606.500 792V798.500H612"/></g>
        <g class="pu"><path d="M544 428.500H603M544 433.500H603M544 506.500H603M544 512.500H603" stroke-dasharray="17 4"/><path d="M542.500 685.500H597L602 691V793L597 798.500H542.500Z"/></g>
        <g class="or"><path d="M607 428.500H665M607 433.500H665M607 506.500H665M607 512.500H665" stroke-dasharray="17 4"/><path d="M665.500 428.500H769.500V433.500H665.500ZM665.500 506.500H769.500V512.500H665.500Z"/>
          <path d="M606.500 685.500H672.500L769 698.500H762.500V784.500H769L672.500 798.500H606.500ZM607 692L612 686M607 792L612 798"/></g>
        <path class="br" d="M603.500 686V798"/>
        <g class="cy"><path d="M812 428.500H883M812 433.500H883M812 506.500H883M812 512.500H883M773.500 450V468M773.500 473V506M776.500 709.500H883M776.500 709V775M776.500 774.500H883"/><path d="M777 739.500H883M799 744.500H875" stroke-dasharray="25 6"/></g>
        <g class="pk"><path d="M769.500 441V450.500H795.500V489.500H769.500V506"/><path d="M607 744.500H795M607 750.500H795" stroke-dasharray="26 6"/><path d="M795.500 744V751"/></g>
        <g class="mg"><path d="M773.500 428.500H812.500V433.500H773.500ZM792.500 428V433M773.500 506.500H812.500V512.500H773.500ZM792.500 506V512M776.500 698V710M776.500 774V784M793 698.500L812.500 703.500V709M780 784.500H786L812.500 779.500V774"/></g>
        <g class="gn"><path d="M773.500 357.500H795.500M773.500 355V450M795.500 355V450M769.500 394.500H774M769.500 394V428M785 483.500H849M795 489.500H849M847.500 480V493M824.500 487V515M792 512.500H826M762.500 542.500H780.500M762.500 519V545M780.500 519V545M785.500 587.500H795.500M785.500 483V590M795.500 490V590M672.500 656.500H769.500M672.500 654V685M769.500 654V698M780.500 689.500H812.500M780.500 687V698M812.500 687V703M780 698.500H829M776 709.500H827M826.500 696V712M812 779.500H823M786 784.500H823M821.500 777V787M786.500 793.500H812.500M786.500 785V795M812.500 780V795"/>
          <path stroke-width="2" d="M771 361L776 354M793 361L798 354M767 398L772 391M771 398L776 391M845 479L850 485M845 486L850 492M822 486L827 492M822 509L827 515M760 545L765 540M778 545L783 540M783 590L788 585M793 590L798 585M670 659L675 654M767 659L772 654M778 692L783 687M810 692L815 687M824 695L829 701M824 706L829 712M819 777L824 782M819 782L824 787M784 796L789 791M810 796L815 791"/></g>
        <g class="rd"><path d="M762.500 433.500H780.500V440.500H762.500ZM762.500 512.500H780.500V518.500H762.500ZM762 698.500H781M762 784.500H781"/><path d="M780.500 698V784" stroke-dasharray="22 6 8 6"/></g>
        <path class="wh" d="M785.500 454V486" stroke-dasharray="1 2"/>
        <path class="nut" d="M785.500 455L788.500 459L785.500 463L782.500 459ZM785.500 466L788.500 470.500L785.500 475L782.500 470.500ZM785.500 478L788.500 482L785.500 486L782.500 482ZM783 739H788V751H783Z"/>
        <g class="wh"><path d="M525 369.500H597.500L605.500 352V385L613.500 369.500H681M525 572.500H597.500L605.500 556V588L613.500 572.500H681M883.500 419V466.500L900 471.500H863M883.500 490V522M883.500 695V735.500L897.500 741.500H870L883.500 749.500V787"/>
          <path d="M683 353.500H705.500L733.500 464.500M884.500 377.500H842L801.500 431.500M842 377.500L800.500 511.500M459 610.500H501L577.500 429M501 610.500L576.500 507M628 605.500H679.500L702.500 430M679.500 605.500L719.500 508.500M908 623.500H869L774 436.500M869 623.500L769 516"/></g>
        <g class="num"><text x="684" y="351">③</text><text x="842" y="374">④⑤</text><text x="841" y="396">⑥⑦</text><text x="634" y="603">①②</text><text x="459" y="607">⑩⑪</text><text x="871" y="621">⑧⑨</text></g>
      </svg>
      <input class="d1" aria-label="腹板连接板厚" value="15"><input class="d2" aria-label="连接板宽" value="120"><input class="d3" aria-label="间隙" value="20"><input class="d4" aria-label="边距一" value="50"><input class="d5" aria-label="高差" value="40"><input class="d6" aria-label="衬板宽" value="45"><input class="d7" aria-label="边距二" value="50"><input class="d8" aria-label="加劲板厚" value="20"><input class="d9" aria-label="衬板厚" value="10"><input class="d10" aria-label="变截面长" value="260"><input class="d11" aria-label="上加劲长" value="140"><input class="d12" aria-label="上加劲宽" value="40"><input class="d13" aria-label="下加劲宽" value="30"><input class="d14" aria-label="下加劲长" value="115">
    </div></div>
    <div class="side">
      <div class="stabs"><button class="on">钢板</button><button>添加零件</button></div>
      <div class="tbox">
        <div class="tclip"><table class="parts"><colgroup><col class="k0"><col class="k1"><col class="k2"><col class="k2"><col class="k4"><col class="k5"><col class="k6"><col class="k7"></colgroup>
          <tr><th></th><th>零件名称</th><th>数量</th><th>厚度</th><th>规格</th><th>材质</th><th>归属</th><th class="cut">显示</th></tr>
          <tr><td>1</td><td>梁上翼缘连接板</td><td>1</td><td>13</td><td>13*152213(t*s)</td><td>Q235B</td><td>次件</td><td><input type="checkbox" aria-label="显示1" checked></td></tr>
          <tr><td>2</td><td>梁下翼缘连接板</td><td>1</td><td>13</td><td>13*152213(t*s)</td><td>Q235B</td><td>次件</td><td><input type="checkbox" aria-label="显示2" checked></td></tr>
          <tr><td>3</td><td>梁腹板连接板</td><td>1</td><td>15</td><td>15*199419(t*s)</td><td>Q235B</td><td>次件</td><td><input type="checkbox" aria-label="显示3" checked></td></tr>
          <tr><td>4</td><td>梁上翼缘加劲...</td><td>1</td><td>13</td><td>13*3875(t*s)</td><td>Q235B</td><td>次件</td><td><input type="checkbox" aria-label="显示4" checked></td></tr>
          <tr><td>5</td><td>梁上翼缘加劲...</td><td>1</td><td>13</td><td>13*3875(t*s)</td><td>Q235B</td><td>次件</td><td><input type="checkbox" aria-label="显示5" checked></td></tr>
          <tr><td>6</td><td>梁下翼缘加劲...</td><td>1</td><td>13</td><td>13*3875(t*s)</td><td>Q235B</td><td>次件</td><td><input type="checkbox" aria-label="显示6" checked></td></tr>
          <tr><td>7</td><td>梁下翼缘加劲...</td><td>1</td><td>13</td><td>13*3875(t*s)</td><td>Q235B</td><td>次件</td><td><input type="checkbox" aria-label="显示7" checked></td></tr>
          <tr><td>8</td><td>梁上翼缘焊接...</td><td>1</td><td>10</td><td>10*45*280</td><td>Q235B</td><td>次件</td><td><input type="checkbox" aria-label="显示8" checked></td></tr>
          <tr><td></td><td>梁下翼缘焊接...</td><td></td><td></td><td></td><td></td><td>次件</td><td><input type="checkbox" aria-label="显示9" checked></td></tr>
        </table></div>
        <div class="vbar"><i></i></div><div class="hbar"><i></i></div>
      </div>
      <div class="pbox"><p>节点 / 细部三维预览</p>
        <svg viewBox="1031 752 571 198" preserveAspectRatio="xMidYMid slice">
          <path d="M1031 752H1602V950H1031Z" fill="#000"/>
          <path d="M1209 752H1255L1602 761V950L1217 869Z" fill="#38b072"/>
          <path d="M1255 752H1443L1602 755V761ZM1217 869L1602 949V950H1510L1232 888L1198 880Z" fill="#226b44"/>
          <path d="M1232 888L1510 950H1485L1232 892Z" fill="#38b072"/>
          <path d="M1031 752H1087L1122 950H1061L1031 825Z" fill="#b650f8"/>
          <path d="M1087 752H1105L1120 850L1115 875L1168 883L1177 950H1122ZM1200 888H1204L1210 950H1206Z" fill="#823cb0"/>
          <path d="M1168 882L1201 888L1207 950H1177Z" fill="#b650f8"/>
          <path d="M1105 752H1202V767L1236 768L1242 864L1212 859L1211 867L1119 849Z" fill="#d899d6"/>
          <path d="M1233 768H1237L1243 864H1240ZM1202 760H1204V767H1202ZM1210 859H1213V867L1210 867Z" fill="#a06c9c"/>
          <path d="M1204 760H1209V767H1204Z" fill="#000"/>
          <path d="M1111 853L1122 849L1210 867L1217 867L1183 883L1115 873Z" fill="#8a5a48"/>
          <path d="M1115 873L1183 883V886L1116 876ZM1094 752H1167V755L1094 753Z" fill="#f09878"/>
          <path d="M1183 883L1217 866V870L1183 886Z" fill="#a86850"/>
          <path d="M1187 884L1198 880L1232 888V890Z" fill="#4a3c98"/>
          <path d="M1187 884L1232 888V893L1192 888ZM1172 752H1222V756L1172 754Z" fill="#7868f0"/>
          <path d="M1165 758L1211 756V760L1168 763ZM1180 886L1187 886L1194 889L1191 891Z" fill="#6a0000"/>
          <use href="#bolt" x="1214" y="779" width="9" height="6"/><use href="#bolt" x="1216" y="801" width="9" height="6"/><use href="#bolt" x="1217" y="822" width="9" height="6"/><use href="#bolt" x="1219" y="842" width="9" height="6"/>
          <path d="M1602 828L1581 827Q1557 827 1557 832Q1562 846 1602 849V847Q1570 842 1569 834Q1572 828 1602 830Z" fill="#e0dcd4"/>
          <path d="M1079 898V884H1075.500L1081 873L1086.500 884H1083V898Z" fill="#0000f0"/><circle cx="1089" cy="895" r="5" fill="#00e000"/><path d="M1083 900H1096L1095 897L1107 904L1095 909V905L1083 903Z" fill="#f00000"/><path d="M1076 898H1083V905H1076Z" fill="#ccc"/>
          <g class="ax"><text x="1081" y="872" fill="#0000f0">Z</text><text x="1098" y="896" fill="#00e000">Y</text><text x="1113" y="912" fill="#f00000">X</text></g>
        </svg>
      </div>
    </div>
  </div>
  <div class="dend"><button class="primary">下一步</button><button>取消</button><i class="size"></i></div>
</div>
</div>
</body>
</html>
```

FILE: styles.css
```css
* { box-sizing: border-box; }
body { margin: 0; background: #fff; color: #333; font: 12px/16px "Noto Sans", "Noto Sans CJK SC", sans-serif; }
h1, h2, p, ul { margin: 0; padding: 0; font-size: 12px; font-weight: 400; list-style: none; }
button, input, select { font: inherit; color: inherit; }
button { display: flex; align-items: center; justify-content: center; margin: 0; padding: 0; border: 0; background: none; white-space: nowrap; }
svg { display: block; flex: none; }
a { color: inherit; text-decoration: none; }
table { border-collapse: collapse; table-layout: fixed; }
.defs { position: absolute; width: 0; height: 0; }
.ic { width: 16px; height: 16px; }
:is(.k, .b, .g, .gd, .k2, .b2, .g2):not([fill]) { fill: none; }
.k, .k2 { stroke: #4a5468; }
.b, .b2 { stroke: #1e78e8; }
.g, .g2 { stroke: #bdbdbd; }
.gd { stroke: #8c8c8c; }
.k2, .b2, .g2 { stroke-width: 2; }
.dd { display: inline-block; flex: none; width: 0; height: 0; border: 3px solid transparent; border-top: 4px solid #6b6b6b; border-bottom: 0; }
.dd.off { border-top-color: #bbb; }

.app { position: relative; display: flex; flex-direction: column; min-height: 100vh; }

/* title bar and ribbon tabs */
.head { position: relative; display: grid; grid-template-columns: 48px 1fr auto 1fr 48px; grid-template-rows: 20px 20px; border-bottom: 1px solid #f0f0f0; }
.logo { grid-row: 1 / 3; display: flex; align-items: flex-end; padding: 0 0 6px 11px; }
.corner { border: 3px solid transparent; border-right-color: #666; border-bottom-color: #666; margin-left: 2px; }
.quick { display: flex; padding-left: 1px; }
.quick button { width: 26px; }
.quick .wide { width: 36px; gap: 4px; }
.quick .thin { width: 16px; }
.title { line-height: 20px; white-space: nowrap; }
.win { grid-column: 4 / 6; display: flex; justify-content: flex-end; }
.win button { width: 36px; }
.second { grid-column: 2 / 6; display: flex; justify-content: space-between; }
.tabs { display: flex; align-items: center; padding-top: 2px; }
.tabs a { height: 20px; line-height: 20px; padding: 0 13px; }
.tabs a:first-child { padding-left: 15px; }
.tabs .on { background: #1890ff; color: #fff; border-radius: 10px; }
.help { display: flex; align-items: center; gap: 6px; padding-right: 7px; }
.search { display: flex; align-items: center; width: 320px; height: 18px; margin-top: 2px; border: 1px solid #ddd; border-radius: 3px; padding: 0 6px 0 3px; }
input { border: 0; padding: 0; outline: 0; background: none; min-width: 0; }
.search input { flex: 1; }
input::placeholder { color: #999; opacity: 1; }
.avatar { background: #8cc4ff; }
.user { margin: 0 12px 0 -5px; }
.q { gap: 2px; font-size: 14px; }
.bubble { position: absolute; right: 460px; top: 13px; width: 263px; height: 34px; line-height: 34px; padding-left: 7px; background: #0a94ff; color: #fff; border-radius: 3px; white-space: nowrap; }
.bubble::after { content: ""; position: absolute; left: 100%; top: 12px; border: 5px solid transparent; border-left-color: #0a94ff; border-right: 0; }

/* ribbon */
.ribbon { display: flex; height: 99px; border-bottom: 1px solid #ccc; }
.grp { display: flex; flex-direction: column; flex: none; margin: 3px 0 4px; border-right: 1px solid #ddd; }
.body { display: flex; height: 71px; }
.big { flex-direction: column; justify-content: flex-start; padding-top: 3px; gap: 3px; width: 56px; }
.col { display: flex; flex-direction: column; }
.tool { justify-content: flex-start; height: 23px; gap: 3px; }
.tool .dd { margin-left: 5px; }
.tool.tight { gap: 0; }
.off { color: #b4b4b4; }
.tool.active { height: 19px; margin: 2px 0 2px -2px; background: #c3daf4; border-radius: 3px; padding: 0 4px 0 2px; }
.cap { display: flex; justify-content: center; align-items: center; gap: 6px; height: 22px; }
.g-sel { width: 134px; }
.g-sel .big { width: 52px; padding-left: 4px; }
.g-draw { width: 246px; padding-left: 2px; }
.g-draw .big { width: 57px; }
.g-draw .col { width: 79px; }
.g-gen { width: 312px; padding-left: 7px; }
.g-gen .col { width: 88px; }
.g-gen .col:nth-child(2) { width: 103px; }
.g-gen .col:nth-child(3) { width: 108px; }
.g-mod { width: 154px; padding-left: 8px; }
.g-mod .col { width: 23px; }
.g-mod .col:nth-child(2) { width: 32px; }
.g-mod .col:nth-child(3) { width: 84px; }
.g-pen { width: 67px; padding-left: 8px; }
.g-pen .col { width: 23px; }
.g-id { width: 78px; }
.g-id .big { width: 68px; }
.g-node { width: 265px; padding-left: 5px; }
.g-node .col { padding-left: 2px; }

.context { display: flex; gap: 3px; height: 26px; padding: 1px 2px 3px; background: #f0f0f0; }
select { appearance: none; width: 99px; height: 22px; padding: 0 0 0 3px; border: 1px solid #ddd; border-radius: 3px; background: url("data:image/svg+xml,%3Csvg xmlns='http://www.w3.org/2000/svg' width='6' height='4'%3E%3Cpath d='M0 0h6L3 4z' fill='%23555'/%3E%3C/svg%3E") no-repeat right 4px center #fff; }

/* working area */
.work { flex: 1; display: grid; grid-template-columns: 139px 308px minmax(0, 1fr) 5px 269px; }
.mid { margin: 0 -4px 0 4px; display: flex; flex-direction: column; gap: 4px; }
.panel { border: 1px solid #d9d9d9; background: #fff; }
.grip { display: flex; justify-content: flex-end; align-items: center; height: 12px; padding-right: 4px; background: #e6e6e6; border-bottom: 1px solid #d9d9d9; }
.ptitle { height: 22px; padding: 0 8px; line-height: 22px; background: #f0f0f0; border-bottom: 1px solid #d9d9d9; color: #777; }
.navtools { display: flex; gap: 4px; height: 28px; padding: 3px 1px; border-bottom: 1px solid #d9d9d9; }
.navtools button { width: 24px; height: 22px; border-radius: 3px; }
.navtools .on { background: #c3daf4; }
.navlist { padding-top: 3px; }
.navlist li { display: flex; align-items: center; gap: 14px; height: 25px; margin-bottom: 3px; padding-left: 17px; }
.navlist .sec { padding-left: 3px; background: #ececec; }
.navlist .cur { background: #d3e7ff; }
.ni { width: 18px; height: 18px; }

.comps { height: 426px; }
.props { flex: 1; }
.ptabs { display: flex; height: 23px; background: #f0f0f0; border-bottom: 1px solid #d9d9d9; }
.ptabs button { padding: 0 9px; background: #ddd; color: #777; }
.ptabs .on { padding: 0 8px; background: #f0f0f0; color: #222; font-weight: 700; }
.ctools { display: flex; gap: 7px; height: 28px; padding-left: 4px; border-bottom: 1px solid #ddd; }
.ctools button { gap: 4px; }
.ctools .dd { margin-left: 3px; }
.csearch { display: flex; align-items: center; height: 19px; padding: 0 2px; border-bottom: 1px solid #ddd; }
.csearch input { flex: 1; }
.t0 { display: flex; align-items: center; gap: 4px; height: 27px; padding: 2px 0 0 13px; }
.t1 { padding-left: 40px; }
.t1 span { display: inline-block; height: 21px; line-height: 21px; padding: 0 4px 0 3px; background: #c3daf4; border-radius: 3px; }
.ptable { width: 100%; }
.p0 { width: 22px; }
.p1 { width: 81px; }
.ptable th, .ptable td { height: 21px; padding: 0 3px; border: 1px solid #ddd; font-weight: 400; text-align: left; white-space: nowrap; }
.ptable th { text-align: center; }
.ptable tr > :first-child { border-left: 0; }
.ptable tr:first-child > * { border-top: 0; }
.ptable .n { text-align: center; }
.ptable .link { color: #1a5cff; }
.ptable .dim { color: #888; }

.canvas { position: relative; margin-left: 8px; background: #212830; overflow: hidden; }
.scene { position: absolute; inset: 0; width: 100%; height: 100%; }
.viewbar { position: absolute; right: 0; top: 0; width: 33px; height: 217px; padding-top: 12px; background: #fff; border-radius: 3px; display: flex; flex-direction: column; align-items: center; }
.v { width: 20px; height: 20px; }
.v:first-child { margin-bottom: 10px; }
.two { width: 19px; height: 20px; margin-bottom: 10px; padding-top: 5px; border: 1px solid #4a5468; color: #1e70e0; font-size: 8px; line-height: 14px; font-weight: 700; }
.viewbar .dd { margin: 7px 0; }
.viewbar hr { width: 24px; margin: 7px 0 6px; border: 0; border-top: 1px solid #555; }
.splitter { display: flex; align-items: center; }
.splitter button { width: 5px; height: 100px; background: #5c6470; color: #fff; }

.disp { display: flex; flex-direction: column; }
.dtabs { display: flex; gap: 3px; align-items: flex-end; height: 26px; padding-left: 2px; border-bottom: 1px solid #ccc; }
.dtabs button { height: 21px; padding: 0 6px; background: #ddd; border-radius: 3px 3px 0 0; }
.dtabs .on { height: 24px; margin-bottom: -1px; background: #fff; border: 1px solid #ccc; border-bottom: 0; color: #1e78e8; }
.dbox { display: flex; margin: 2px 2px 0; border: 1px solid #ccc; padding-bottom: 2px; }
.dtable { flex: 1; }
.c1 { width: 64px; }
.c2 { width: 62px; }
.dtable th, .dtable td { height: 21px; padding: 0; border: 1px solid #ddd; font-weight: 400; text-align: center; }
.dtable tr:first-child > * { border-top: 0; }
.dtable .hl { background: #7cb8f8; color: #fff; font-weight: 700; }
.dtable .leaf { padding-left: 39px; text-align: left; background: linear-gradient(#ddd, #ddd) 7px 0 / 1px 100% no-repeat, linear-gradient(#ddd, #ddd) 17px 0 / 1px 100% no-repeat, linear-gradient(#ddd, #ddd) 17px 9px / 17px 1px no-repeat; }
.dtable .last { background-size: 1px 100%, 1px 10px, 17px 1px; }
.dtable .root { padding-left: 10px; text-align: left; }
.root i { display: inline-block; width: 13px; height: 13px; margin-right: 6px; border: 1px solid #777; border-radius: 2px; font-style: normal; line-height: 10px; text-align: center; vertical-align: 1px; }
input[type="checkbox"] { appearance: none; display: block; width: 14px; height: 14px; margin: 0 auto; border: 1px solid #8a8a8a; border-radius: 2px; background: #fff; }
input[type="checkbox"]:disabled { background: #efefef; border-color: #b5b5b5; }
input[type="checkbox"]:checked { background: #2a7de1; border-color: #2a7de1; }
input[type="checkbox"]:checked::after { content: ""; display: block; width: 5px; height: 9px; margin: 0 0 0 4px; border: solid #fff; border-width: 0 2px 2px 0; transform: rotate(42deg); }
.dscroll { width: 15px; padding: 384px 4px 0 3px; }
.dscroll i { display: block; height: 340px; border-radius: 4px; background: #ccc; }
.dfoot { display: flex; justify-content: flex-end; padding: 7px 8px 5px; }
.dfoot button, .dend button { height: 26px; border: 1px solid #ccc; border-radius: 4px; background: #fff; }
.dfoot button { width: 90px; }

/* status bar */
.status { display: flex; align-items: center; gap: 3px; height: 33px; padding-left: 2px; background: #fcfcfc; }
.status span { white-space: nowrap; }
.f1 { width: 87px; }
.f2 { width: 107px; }
.f3 { width: 106px; }
.status button { gap: 6px; width: 25px; height: 25px; border: 1px solid #aaa; border-radius: 3px; }
.status button:has(.dd) { width: 36px; }
.status .on { background: #d7e7fb; border-color: #3c88e8; }
.status select { width: 100px; height: 26px; border-color: #bbb; }
.hint { margin-left: 10px; }

/* taskbar */
.taskbar { display: flex; align-items: center; gap: 4px; height: 40px; border-top: 1px solid #234; background: radial-gradient(circle at 1190px 280px, transparent 294px, rgba(190, 220, 255, .85) 299px 302px, transparent 309px), linear-gradient(160deg, rgba(255, 255, 255, .12) 45%, transparent 55%), linear-gradient(90deg, #205f94 0, #2a74a8 75px, #4a9ccc 130px, #58a9d8 450px, #3a90cc 640px, #4698d4 820px, #2b7cc2 1000px, #2c80c4 1200px, #2a70b4 1340px, #1c62aa 1480px, #194a80 1530px, #143d6c 100%); }
.start { width: 46px; margin-left: 4px; }
.dots { width: 8px; height: 30px; margin: 0 6px 0 4px; background: radial-gradient(circle, #0e2c48 1px, transparent 1px) 0 0 / 3px 4px; }
.task { width: 58px; height: 39px; border: 1px solid #17405f; border-radius: 3px; background: linear-gradient(160deg, #a6d4ec, #5ba6d2 45%, #3c8cc0); box-shadow: inset 0 0 0 1px #b5dcf0; }
.task.cur { background: linear-gradient(#f2fafd, #d4ecf8); }
.tray { display: flex; align-items: center; gap: 8px; margin-left: auto; color: #fff; height: 100%; }
.tray .dots { margin: 0 2px 0 0; }
.tray time { width: 70px; margin: 0 5px 0 3px; text-align: center; line-height: 19px; }
.tray .ime { margin-right: 4px; }
.peek { width: 15px; height: 38px; border: 1px solid #8ab0d0; background: linear-gradient(135deg, #5f88b0, #173f6c); }

/* node dialog */
.dialog { position: absolute; left: 442px; right: 301px; top: 220px; bottom: 83px; display: flex; flex-direction: column; background: #fff; border: 1px solid #aaa; box-shadow: 0 2px 14px 4px rgba(0, 0, 0, .55); }
.dhead { display: flex; justify-content: space-between; padding: 9px 12px 0 11px; height: 37px; }
.dhead h2 { font-size: 14px; line-height: 20px; }
.dhead button { height: 22px; }
.steps { display: flex; align-items: center; height: 29px; padding-left: 10px; }
.steps b { width: 26px; height: 26px; border: 1px solid #aaa; border-radius: 13px; line-height: 24px; text-align: center; font-weight: 400; }
.steps .on { background: #0083e0; border-color: #0083e0; color: #fff; }
.steps span { margin: 0 6px 0 10px; }
.steps .next { margin-left: 7px; }
.steps hr { width: 100px; margin: 0 9px 0 0; border: 0; border-top: 2px solid #8cc0f0; }
.dbody { flex: 1; display: grid; grid-template-columns: minmax(0, 565fr) minmax(0, 583fr); gap: 6px; padding: 7px 8px 0 13px; }
.frame { margin-top: 3px; border: 1px solid #888c92; }
.sheet { position: relative; width: 460px; height: 590px; background: #212830; }
.sheet input { position: absolute; width: 45px; height: 25px; padding: 0 3px; border: 1px solid #ccc; border-radius: 3px; background: #fff; }
.d1 { left: 178px; top: 40px; }
.d2 { left: 307px; top: 29px; }
.d3 { left: 268px; top: 71px; }
.d4 { left: 395px; top: 174px; }
.d5 { left: 372px; top: 203px; }
.d6 { left: 274px; top: 254px; }
.d7 { left: 325px; top: 299px; }
.d8 { left: 3px; top: 322px; }
.d9 { left: 414px; top: 334px; }
.d10 { left: 248px; top: 330px; }
.d11 { left: 319px; top: 361px; }
.d12 { left: 375px; top: 400px; }
.d13 { left: 370px; top: 476px; }
.d14 { left: 322px; top: 509px; }
.yl { stroke: #e6e600; }
.pu { stroke: #6c256c; }
.or { stroke: #ee6c12; }
.br { stroke: #7a5048; }
.cy { stroke: #00e0e8; }
.pk { stroke: #d09ccc; }
.mg { stroke: #e800e8; }
.gn { stroke: #0a7c0a; }
.rd { stroke: #f00000; }
.wh { stroke: #eee; }
.nut { fill: #f00000; }
.num { fill: #fff; font: 19px "Noto Sans CJK SC", sans-serif; }
.ax { font: 15px "Liberation Sans", sans-serif; text-anchor: middle; }

.side { display: flex; flex-direction: column; }
.stabs { display: flex; align-items: flex-end; gap: 3px; height: 25px; }
.stabs button { width: 68px; height: 21px; background: #ddd; border-radius: 3px 3px 0 0; }
.stabs .on { width: 70px; height: 25px; background: #fff; border: 1px solid #ccc; border-bottom: 0; color: #1e78e8; }
.tbox { display: grid; grid-template-columns: minmax(0, 1fr) 14px; grid-template-rows: 195px 14px; border: 2px solid #ccc; }
.tclip { overflow: hidden; }
.parts { width: 600px; }
.k0 { width: 20px; }
.k1 { width: 95px; }
.k2 { width: 64px; }
.k4 { width: 159px; }
.k5 { width: 71px; }
.k6 { width: 67px; }
.k7 { width: 60px; }
.parts th, .parts td { height: 21px; padding: 0 3px; border: 1px solid #d4d4d4; font-weight: 400; text-align: left; white-space: nowrap; }
.parts th { background: #f0f0f0; text-align: center; }
.parts tr > :first-child { border-left: 0; padding-left: 6px; }
.parts tr:first-child > * { border-top: 0; }
.parts .cut { text-align: left; padding-left: 6px; }
.parts input[type="checkbox"] { margin: 0 0 0 4px; }
.vbar { padding: 14px 3px 0; }
.vbar i { display: block; height: 121px; border-radius: 4px; background: #c8c8c8; }
.hbar { padding: 3px 82px 0 14px; }
.hbar i { display: block; height: 8px; border-radius: 4px; background: #c8c8c8; }
.pbox { height: 224px; margin-top: auto; padding: 7px 7px 0 3px; border: 1px solid #ccc; }
.pbox svg { width: 100%; height: 199px; }
.dend { position: relative; display: flex; justify-content: flex-end; gap: 6px; height: 45px; padding: 9px 10px 0; }
.dend button { width: 80px; }
.dend .primary { background: #2a7de1; border-color: #2a7de1; color: #fff; }
.size { position: absolute; right: 2px; bottom: 2px; width: 9px; height: 9px; background: radial-gradient(circle, #555 1px, transparent 1px) 0 0 / 3px 3px; clip-path: polygon(100% 0, 100% 100%, 0 100%); }
```
